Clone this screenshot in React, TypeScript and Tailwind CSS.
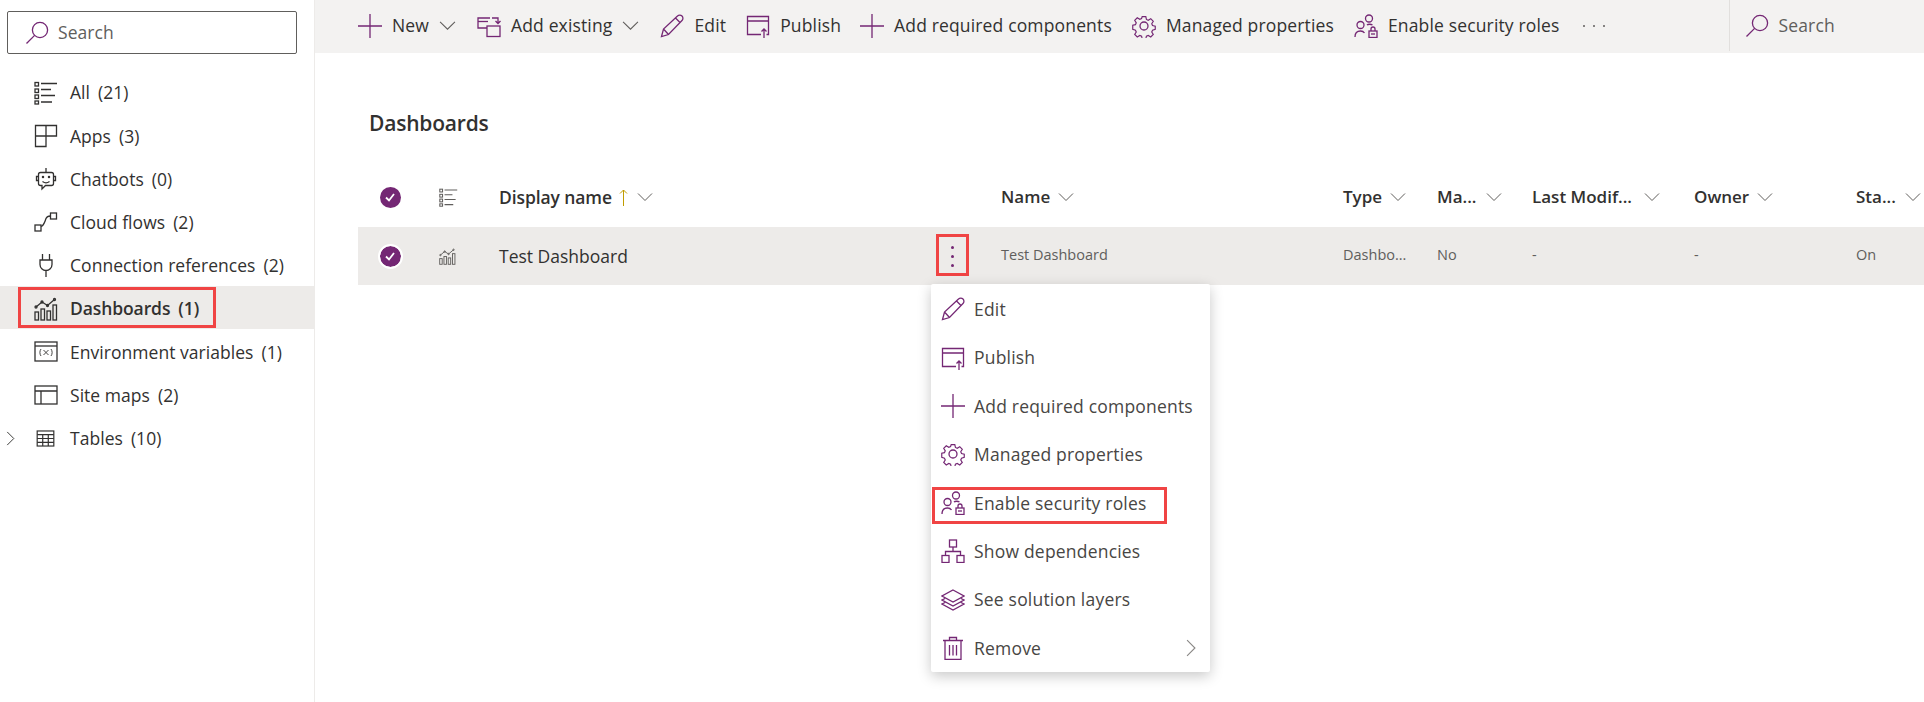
import React from "react";

const P = "#742774";
const D = "#323130";

function Svg({ s = 24, c = P, w = 1.3, children }: { s?: number; c?: string; w?: number; children: React.ReactNode }) {
  return (
    <svg width={s} height={s} viewBox="0 0 24 24" fill="none" stroke={c} strokeWidth={w} className="shrink-0 block">
      {children}
    </svg>
  );
}

const SearchI = ({ s = 24 }: { s?: number }) => (
  <Svg s={s}><circle cx="15" cy="9" r="7.6" /><path d="M9.6 14.4 1.5 22.5" /></Svg>
);
const ListI = ({ c = D, s = 24 }: { c?: string; s?: number }) => (
  <Svg s={s} c={c}>
    <rect x="1" y="1.5" width="3.5" height="3.5" /><rect x="1" y="8" width="3.5" height="3.5" /><rect x="1" y="14" width="3.5" height="3.5" /><rect x="1" y="20" width="3.5" height="3" />
    <path d="M7 2.500h16M7 8.500h10M7 14.500h14M7 21h11" />
  </Svg>
);
const AppsI = () => (
  <Svg c={D}><path d="M1.5 1.5h21v10.5H12v10.500H1.500zM12 1.500V12M1.500 12H12" /></Svg>
);
const BotI = () => (
  <Svg c={D}>
    <path d="M12 1v4M6.500 5.500h11a2 2 0 0 1 2 2v9a2 2 0 0 1-2 2h-6l-3.500 3.500v-3.500h-1.500a2 2 0 0 1-2-2v-9a2 2 0 0 1 2-2z" />
    <path d="M4.500 9.500H2.500v4h2M19.500 9.500h2v4h-2M8.500 14.500c2 1.500 5 1.500 7 0" />
    <circle cx="9" cy="10" r=".6" fill={D} /><circle cx="15" cy="10" r=".6" fill={D} />
  </Svg>
);
const FlowI = () => (
  <Svg c={D}>
    <rect x="1" y="15" width="6" height="6" /><rect x="16.500" y="3" width="6" height="6" />
    <path d="M7 16.500c3-1 3.500-4 5-8 .8-2 2-2.500 4.500-2.500" />
  </Svg>
);
const PlugI = () => (
  <Svg c={D}>
    <path d="M8.500 1v6M15.500 1v6M6 7h12v4.500a6 6 0 0 1-12 0zM12 17.500V24" />
  </Svg>
);
const DashI = ({ s = 24, c = D }: { s?: number; c?: string }) => (
  <Svg s={s} c={c}>
    <rect x="1" y="15" width="3.500" height="8" /><rect x="7" y="12" width="3.500" height="11" /><rect x="13" y="14" width="3.500" height="9" /><rect x="19" y="8" width="3.500" height="15" />
    <path d="M2 10 8 5l5.500 3.500L20.500 2.500" />
    <circle cx="2" cy="10" r="1" /><circle cx="8" cy="5" r="1" /><circle cx="13.500" cy="8.500" r="1" /><circle cx="20.500" cy="2.500" r="1" />
  </Svg>
);
const EnvI = () => (
  <Svg c={D}>
    <rect x="1" y="2" width="22" height="19" /><path d="M1 6h22" />
    <path d="M7 9c-1.500 2-1.500 5 0 7M17 9c1.500 2 1.500 5 0 7M9.500 10l5 5M14.500 10l-5 5" strokeWidth=".9" />
  </Svg>
);
const SiteI = () => (
  <Svg c={D}><rect x="1" y="3" width="22" height="18" /><path d="M1 8h22M7 8v13" /></Svg>
);
const TableI = () => (
  <Svg s={19} c={D} w={1.5}>
    <rect x="1.500" y="2.500" width="21" height="19" /><path d="M1.500 7h21M1.500 12h21M1.500 17h21M8.500 7v14.500M15.500 7v14.500" />
  </Svg>
);
const PlusI = ({ c = P }: { c?: string }) => <Svg c={c}><path d="M12 0v24M0 12h24" /></Svg>;
const AddExistI = () => (
  <Svg>
    <path d="M10 14H1V4h12" /><path d="M1 7.500h10" />
    <rect x="10" y="12" width="13" height="10.500" />
    <path d="M15 4h6v5M18.500 7l2.500 2.500L23.500 7" />
  </Svg>
);
const PencilI = () => (
  <Svg>
    <path d="M1.500 22.500 3.500 15 17.500 2a3 3 0 0 1 4.500 4.500L8.500 20.500zM3.500 15l5 5.500M15.500 4l4.500 4.500" />
  </Svg>
);
const PublishI = () => (
  <Svg>
    <path d="M15 20.500H1.500v-18h21v18h-2M1.500 7h21M18 24v-9M15.500 17.500 18 15l2.500 2.500" />
  </Svg>
);
const GearI = () => (
  <Svg>
    <circle cx="12" cy="12" r="4" />
    <path d="M10 1.500h4l.7 3.200 2 .9 2.800-1.700 2.800 2.800-1.700 2.800.9 2 3 .7v3.600l-3 .8-.9 2 1.700 2.800-2.800 2.800-2.800-1.700-2 .8-.7 3h-4l-.7-3-2-.8-2.800 1.700-2.800-2.800 1.700-2.800-.9-2-3-.8V11.200l3-.7.900-2-1.700-2.800L4.500 2.900l2.800 1.700 2-.9z" transform="translate(1.200 1.200) scale(.9)" />
  </Svg>
);
const RolesI = () => (
  <Svg>
    <circle cx="15" cy="4.500" r="3.500" /><circle cx="6.500" cy="11" r="3.500" />
    <path d="M1 23c0-4 2-6 5.500-6 1.500 0 3 .5 4 2M13 11c1-1 4-1 5.500 0" />
    <rect x="15" y="17" width="8" height="6.500" /><path d="M17 17v-2a2 2 0 0 1 4 0v2" />
    <path d="M17 20h4" />
  </Svg>
);
const DepsI = () => (
  <Svg>
    <rect x="8.500" y="1" width="7" height="7" /><rect x="1" y="16.500" width="7" height="7" /><rect x="16" y="16.500" width="7" height="7" />
    <path d="M12 8v4.500M4.500 16.500v-4h15v4" />
  </Svg>
);
const LayersI = () => (
  <Svg>
    <path d="M12 2 23 8 12 14 1 8zM4 10.500 1 12l11 6 11-6-3-1.500M4 14.500 1 16l11 6 11-6-3-1.500" />
  </Svg>
);
const TrashI = () => (
  <Svg>
    <path d="M2 4.500h20M8.500 4.500V1.500h7v3M4 4.500v19h16v-19M8.500 9v10.500M12 9v10.500M15.500 9v10.500" />
  </Svg>
);
const Chev = ({ c = "#605e5c", s = 16 }: { c?: string; s?: number }) => (
  <svg width={s} height={s} viewBox="0 0 16 16" fill="none" stroke={c} strokeWidth={1} className="shrink-0 block">
    <path d="M1 4.500 8 11.500 15 4.500" />
  </svg>
);
const ChevR = ({ s = 16, c = "#605e5c" }: { s?: number; c?: string }) => (
  <svg width={s} height={s} viewBox="0 0 16 16" fill="none" stroke={c} strokeWidth={1} className="shrink-0 block">
    <path d="M4.500 1 11.500 8 4.500 15" />
  </svg>
);
const Check = ({ ring }: { ring?: boolean }) => (
  <span className={`flex h-[21px] w-[21px] items-center justify-center rounded-full bg-[#742774] ${ring ? "outline-2 outline-white" : ""}`}>
    <svg width="12" height="12" viewBox="0 0 12 12" fill="none" stroke="#fff" strokeWidth="1.800"><path d="M2 6.500 5 9.500 10 3" /></svg>
  </span>
);

const nav = [
  { i: <ListI />, t: "All", n: "(21)" },
  { i: <AppsI />, t: "Apps", n: "(3)" },
  { i: <BotI />, t: "Chatbots", n: "(0)" },
  { i: <FlowI />, t: "Cloud flows", n: "(2)" },
  { i: <PlugI />, t: "Connection references", n: "(2)" },
  { i: <DashI />, t: "Dashboards", n: "(1)", active: true },
  { i: <EnvI />, t: "Environment variables", n: "(1)" },
  { i: <SiteI />, t: "Site maps", n: "(2)" },
  { i: <TableI />, t: "Tables", n: "(10)", exp: true },
];

const tools = [
  { i: <PlusI />, t: "New", chev: true, gap: "mr-[21px]" },
  { i: <AddExistI />, t: "Add existing", chev: true, gap: "mr-[21px]" },
  { i: <PencilI />, t: "Edit", gap: "mr-[20px]" },
  { i: <PublishI />, t: "Publish", gap: "mr-[19px]" },
  { i: <PlusI />, t: "Add required components", gap: "mr-[20px]" },
  { i: <GearI />, t: "Managed properties", gap: "mr-[20px]" },
  { i: <RolesI />, t: "Enable security roles", gap: "mr-[24px]" },
];

const menu = [
  { i: <PencilI />, t: "Edit" },
  { i: <PublishI />, t: "Publish" },
  { i: <PlusI />, t: "Add required components" },
  { i: <GearI />, t: "Managed properties" },
  { i: <RolesI />, t: "Enable security roles", boxed: true },
  { i: <DepsI />, t: "Show dependencies" },
  { i: <LayersI />, t: "See solution layers" },
  { i: <TrashI />, t: "Remove", more: true },
];

const cols = "grid grid-cols-[64px_77px_502px_342px_94px_95px_162px_162px_68px]";
const cell = "pb-[2px] text-[14.500px] whitespace-nowrap text-[#605e5c]";

function Head({ t, gap = "ml-2", w }: { t: string; gap?: string; w?: string }) {
  return (
    <div className={`flex items-center ${w ?? ""}`}>
      <span className="text-[17px] font-semibold text-[#323130] whitespace-nowrap">{t}</span>
      <span className={gap}><Chev /></span>
    </div>
  );
}

export default function App() {
  return (
    <div className="relative flex h-[702px] w-[1924px] overflow-hidden bg-white font-['Open_Sans','Noto_Sans',sans-serif] text-[#323130]">
      <aside className="h-full w-[315px] shrink-0 border-r border-[#edebe9] pt-[11px] tracking-[0.04px]">
        <div className="mx-[7px] flex h-[43px] w-[290px] items-center rounded-[2px] border border-[#605e5c] pl-[17px]">
          <SearchI />
          <span className="ml-[9px] text-[17.500px] text-[#605e5c]">Search</span>
        </div>
        <nav className="mt-[16px]">
          {nav.map((r) => (
            <div key={r.t} className={`flex h-[43.200px] items-center pt-[2px] ${r.active ? "bg-[#edebe9]" : ""}`}>
              <span className="flex w-[34px] shrink-0 justify-start pl-[3px]">
                {r.exp ? <ChevR c="#323130" s={15} /> : null}
              </span>
              <span className="flex w-[36px] shrink-0 justify-start">
                {r.exp ? <span className="ml-[2px]"><TableI /></span> : r.i}
              </span>
              <span className={`text-[17.500px] whitespace-nowrap ${r.active ? "font-semibold tracking-[-0.1px]" : ""}`}>{r.t}</span>
              <span className={`ml-[8px] text-[17.500px] ${r.active ? "font-semibold tracking-[-0.1px]" : ""}`}>{r.n}</span>
            </div>
          ))}
        </nav>
      </aside>

      <main className="min-w-0 flex-1">
        <header className="flex h-[53px] items-center bg-[#f3f2f1] pb-[2px] pl-[43px] tracking-[0.15px]">
          {tools.map((b) => (
            <div key={b.t} className={`flex items-center ${b.gap}`}>
              {b.i}
              <span className="ml-[10px] text-[17.500px] whitespace-nowrap">{b.t}</span>
              {b.chev ? <span className="ml-[10px]"><Chev s={17} /></span> : null}
            </div>
          ))}
          <span className="flex w-[22px] justify-between">
            <i className="block h-[2px] w-[2px] rounded-full bg-[#605e5c]" />
            <i className="block h-[2px] w-[2px] rounded-full bg-[#605e5c]" />
            <i className="block h-[2px] w-[2px] rounded-full bg-[#605e5c]" />
          </span>
          <div className="ml-[124px] flex h-full items-center border-l border-[#e1dfdd] pl-[15px]">
            <SearchI />
            <span className="ml-[9px] text-[17.500px] text-[#605e5c]">Search</span>
          </div>
        </header>

        <h1 className="mt-[54px] ml-[54px] text-[21px] leading-[32px] font-semibold tracking-[-0.2px]">Dashboards</h1>

        <section className="mt-[28px] ml-[43px]">
          <div className={`${cols} h-[60px] items-center`}>
            <div className="flex justify-center"><Check /></div>
            <div className="pl-[17px]"><ListI c="#605e5c" s={19} /></div>
            <div className="flex items-center">
              <span className="text-[17.500px] font-semibold whitespace-nowrap tracking-[-0.1px]">Display name</span>
              <svg width="9" height="17" viewBox="0 0 9 17" fill="none" stroke="#c19c00" strokeWidth="1" className="ml-[7px] block shrink-0">
                <path d="M4.500 17V1M1 4.500 4.500 1 8 4.500" />
              </svg>
              <span className="ml-[9px]"><Chev /></span>
            </div>
            <Head t="Name" />
            <Head t="Type" />
            <Head t="Ma..." gap="ml-[9px]" />
            <Head t="Last Modif..." gap="ml-[12px]" />
            <Head t="Owner" />
            <Head t="Sta..." gap="ml-[9px]" />
          </div>
          <div className={`${cols} h-[58px] items-center bg-[#edebe9]`}>
            <div className="flex justify-center"><Check ring /></div>
            <div className="pl-[17px]"><DashI s={17} c="#605e5c" /></div>
            <div className="flex items-center justify-between">
              <span className="text-[17.500px] whitespace-nowrap">Test Dashboard</span>
              <span className="mr-[47px] flex flex-col items-center gap-[6px]">
                <i className="block h-[3px] w-[3px] rounded-full bg-[#742774]" />
                <i className="block h-[3px] w-[3px] rounded-full bg-[#742774]" />
                <i className="block h-[3px] w-[3px] rounded-full bg-[#742774]" />
              </span>
            </div>
            <span className={cell}>Test Dashboard</span>
            <span className={cell}>Dashbo...</span>
            <span className={cell}>No</span>
            <span className={cell}>-</span>
            <span className={cell}>-</span>
            <span className={cell}>On</span>
          </div>
        </section>
      </main>

      {/* Annotation boxes and the context menu lie over the page */}
      <div className="absolute left-[18px] top-[287px] h-[41px] w-[198px] border-[3px] border-[#f04444]" />
      <div className="absolute left-[936px] top-[234px] h-[42px] w-[33px] border-[3px] border-[#f04444]" />

      <div className="absolute left-[931px] top-[284px] h-[388px] w-[279px] rounded-[2px] bg-white pt-[1px] tracking-[0.2px] shadow-[0_4px_14px_rgba(0,0,0,0.22)]">
        {menu.map((m) => (
          <div key={m.t} className="flex h-[48.400px] items-center pl-[10px]">
            {m.i}
            <span className="ml-[9px] text-[17.500px] whitespace-nowrap text-[#484644]">{m.t}</span>
            {m.more ? <span className="mr-[10px] ml-auto"><ChevR s={18} c="#8a8886" /></span> : null}
          </div>
        ))}
      </div>
      <div className="absolute left-[932px] top-[487px] h-[37px] w-[235px] border-[3px] border-[#f04444]" />
    </div>
  );
}
